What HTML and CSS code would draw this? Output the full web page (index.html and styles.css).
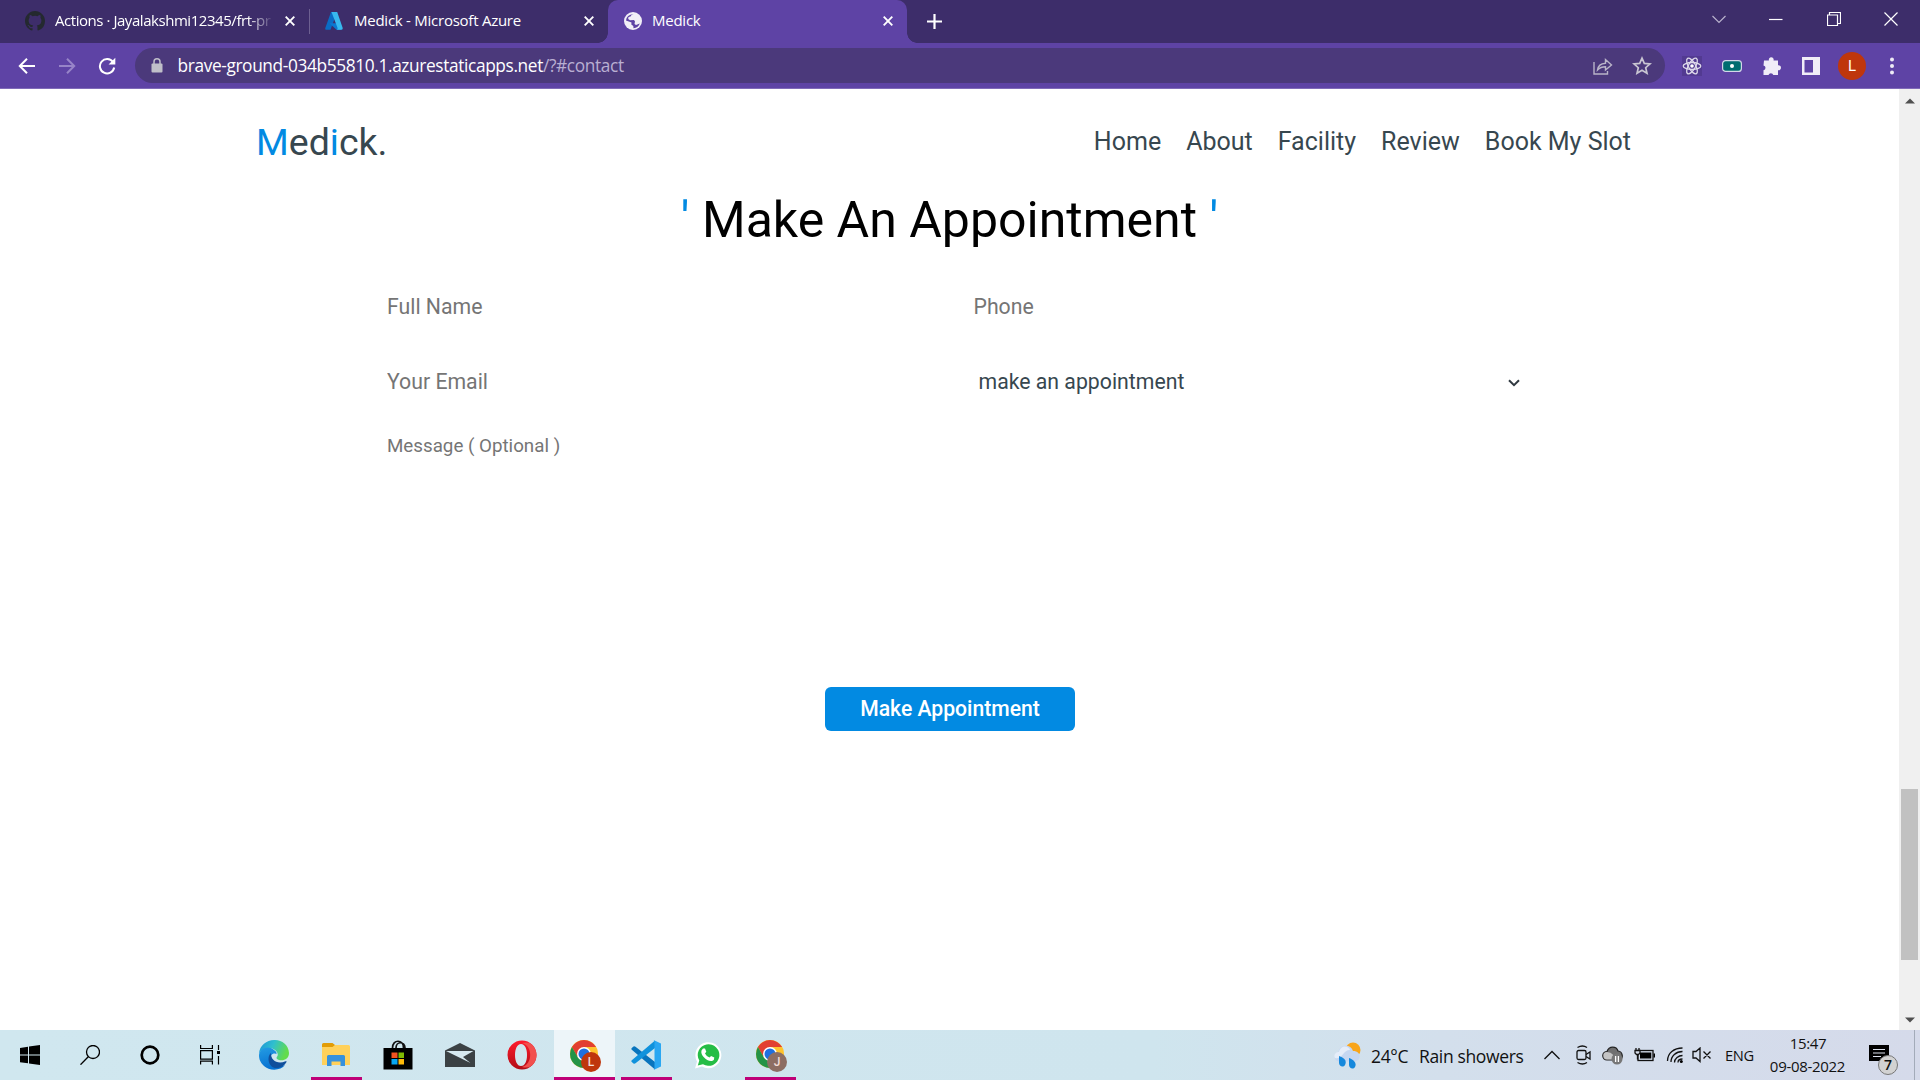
FILE: index.html
```html
<!DOCTYPE html>
<html lang="en">
<head>
<meta charset="utf-8">
<title>Medick</title>
<link rel="stylesheet" href="styles.css">
</head>
<body>
<div class="screen">
  <div class="tabstrip">
    <div class="tab tab-first">
      <svg class="fav-github" width="20" height="20" viewBox="0 0 16 16"><path fill="#24292f" d="M8 0C3.58 0 0 3.58 0 8c0 3.54 2.29 6.53 5.47 7.59.4.07.55-.17.55-.38 0-.19-.01-.82-.01-1.49-2.01.37-2.53-.49-2.69-.94-.09-.23-.48-.94-.82-1.13-.28-.15-.68-.52-.01-.53.63-.01 1.08.58 1.23.82.72 1.21 1.87.87 2.33.66.07-.52.28-.87.51-1.07-1.78-.2-3.64-.89-3.64-3.95 0-.87.31-1.59.82-2.15-.08-.2-.36-1.02.08-2.12 0 0 .67-.21 2.2.82a7.4 7.4 0 0 1 4 0c1.53-1.04 2.2-.82 2.2-.82.44 1.1.16 1.92.08 2.12.51.56.82 1.27.82 2.15 0 3.07-1.87 3.75-3.65 3.95.29.25.54.73.54 1.48 0 1.07-.01 1.93-.01 2.2 0 .21.15.46.55.38A8.01 8.01 0 0 0 16 8c0-4.42-3.58-8-8-8z"/></svg>
      <span class="tab-title fade">Actions · Jayalakshmi12345/frt-pr</span>
      <svg class="x" width="10" height="10" viewBox="0 0 10 10"><path d="M.7.7l8.6 8.6M9.3.7L.7 9.3"/></svg>
    </div>
    <i class="tab-sep"></i>
    <div class="tab tab-second">
      <svg width="20" height="20" viewBox="0 0 20 20"><path fill="#0a6cc4" d="M7 1h6L6.500 18.800H2Q.7 18.500 1.300 17z"/><path fill="#0b79d0" d="M5.500 12.300h9.500l2.500 6.500h-5z"/><path fill="#38b9ee" d="M7.500 1h5.700l5.500 16q.3 1.500-1.200 1.800h-4.800q1.300-.5.800-2z"/></svg>
      <span class="tab-title">Medick - Microsoft Azure</span>
      <svg class="x" width="10" height="10" viewBox="0 0 10 10"><path d="M.7.7l8.600 8.600M9.300.7L.7 9.300"/></svg>
    </div>
    <div class="tab tab-active">
      <svg width="18" height="18" viewBox="0 0 18 18"><circle cx="9" cy="9" r="9" fill="#f1eff7"/><path fill="#5e43a5" d="M9.500 2Q7 2.500 6.500 4.500L4.500 5l-.3 2L6 8.200l4-.2 1 1.500-.5 2.500 1.500 1 3.800-1.500Q14 16 9.500 16.200L9.300 14l-2-1.500.2-2-2-.8L2 8.500Q2.500 2.800 9.500 2z"/></svg>
      <span class="tab-title">Medick</span>
      <svg class="x" width="10" height="10" viewBox="0 0 10 10"><path d="M.7.7l8.600 8.600M9.300.7L.7 9.300"/></svg>
    </div>
    <svg class="plus" width="15" height="15" viewBox="0 0 15 15"><path d="M7.500 0v15M0 7.500h15"/></svg>
    <div class="window-buttons">
      <svg width="14" height="14" viewBox="0 0 14 14" stroke="#b9b2cd"><path d="M.5 4L7 10.500 13.500 4"/></svg>
      <svg width="14" height="14" viewBox="0 0 14 14"><path d="M0 7.500h13.500"/></svg>
      <svg width="14" height="14" viewBox="0 0 14 14"><path d="M.5 3h10v10.500H.5zM2.500 3V.5h11v11h-3"/></svg>
      <svg width="14" height="14" viewBox="0 0 14 14"><path d="M.5.5l13 13M13.500.5l-13 13"/></svg>
    </div>
  </div>

  <div class="toolbar">
    <div class="nav-buttons">
      <svg width="18" height="18" viewBox="0 0 18 18" stroke="#fff"><path d="M17 9H2M9 1.800L1.800 9 9 16.200"/></svg>
      <svg width="18" height="18" viewBox="0 0 18 18" stroke="#9784c8"><path d="M1 9h15M9 1.800L16.200 9 9 16.200"/></svg>
      <svg width="18" height="18" viewBox="0 0 18 18" stroke="#fff"><path d="M15 5A7.200 7.200 0 1 0 16.200 10.500"/><path d="M17.300.8v6.700h-6.700z" fill="#fff" stroke="none"/></svg>
    </div>
    <div class="omnibox">
      <svg class="lock" width="12" height="15" viewBox="0 0 12 15"><path d="M3 6V3.800a3 3 0 0 1 6 0V6" fill="none" stroke="#c0bfc9" stroke-width="1.500"/><rect y="5.500" x=".5" width="11" height="9" rx="1" fill="#c0bfc9"/></svg>
      <span class="url">brave-ground-034b55810.1.azurestaticapps.net<em>/?#contact</em></span>
      <svg class="share" width="20" height="18" viewBox="0 0 20 18"><path d="M1 5v12h13.500v-3M4.500 13c.5-4 3-6.500 8-6.800V2.500L18.500 8l-6 5V9.800c-4 0-6 1-8 3.200z"/></svg>
      <svg width="20" height="20" viewBox="0 0 20 20"><path stroke="#c9c6d2" stroke-width="1.700" fill="none" d="M10 2.200l2.300 5.200 5.700.5-4.300 3.800 1.300 5.600-5-3-5 3 1.300-5.600L2 7.900l5.700-.5z"/></svg>
    </div>
    <div class="extensions">
      <svg width="20" height="20" viewBox="0 0 20 20"><rect width="20" height="20" fill="#523a91"/><g fill="none" stroke="#ddd8ea" stroke-width="1.300"><ellipse cx="10" cy="10" rx="8.800" ry="3.500"/><ellipse cx="10" cy="10" rx="8.800" ry="3.500" transform="rotate(60 10 10)"/><ellipse cx="10" cy="10" rx="8.800" ry="3.500" transform="rotate(120 10 10)"/></g><circle cx="10" cy="10" r="1.800" fill="#fff"/></svg>
      <svg width="20" height="12" viewBox="0 0 20 12"><rect x=".6" y=".6" width="18.800" height="10.800" rx="3" fill="#006d70" stroke="#d3d8e8" stroke-width="1.200"/><circle cx="10" cy="6" r="2" fill="#fff"/></svg>
      <svg width="20" height="20" viewBox="0 0 20 20"><path fill="#f0edf7" d="M2 4.500h5A2.400 2.400 0 1 1 11.500 4.500H16v4.800a2.500 2.500 0 1 1 0 4.900V19h-4.700a2.500 2.500 0 0 0-4.800 0H1.500v-4.700a2.500 2.500 0 0 0 0-4.900z"/></svg>
      <svg width="18" height="18" viewBox="0 0 18 18"><path fill="#f0edf7" fill-rule="evenodd" d="M0 0h18v18H0zM2.500 3v12.500H11V3z"/></svg>
      <b class="avatar">L</b>
      <svg class="dots" width="18" height="18" viewBox="0 0 18 18" fill="#eeebf6"><circle cx="9" cy="2.500" r="2"/><circle cx="9" cy="9" r="2"/><circle cx="9" cy="15.500" r="2"/></svg>
    </div>
  </div>

  <div class="viewport">
    <main class="page">
      <header class="site-header">
        <a class="logo"><span>M</span>ed<span>i</span>ck.</a>
        <nav class="site-nav"><a>Home</a><a>About</a><a>Facility</a><a>Review</a><a>Book My Slot</a></nav>
      </header>
      <h1 class="heading"><span>'</span> Make An Appointment <span>'</span></h1>
      <form class="contact">
        <input class="field" type="text" placeholder="Full Name">
        <input class="field" type="text" placeholder="Phone">
        <input class="field" type="text" placeholder="Your Email">
        <div class="choice"><span>make an appointment</span><svg width="12" height="8" viewBox="0 0 12 8"><path d="M1 1.200l5 5 5-5" fill="none" stroke="#303940" stroke-width="2"/></svg></div>
        <textarea class="message" placeholder="Message ( Optional )"></textarea>
        <button class="submit" type="button">Make Appointment</button>
      </form>
    </main>
    <div class="scrollbar">
      <svg width="10" height="6" viewBox="0 0 10 6"><path d="M0 5.500L5 .5l5 5z" fill="#505050"/></svg>
      <i class="thumb"></i>
      <svg class="down" width="10" height="6" viewBox="0 0 10 6"><path d="M0 .5l5 5 5-5z" fill="#505050"/></svg>
    </div>
  </div>

  <div class="taskbar">
    <div class="system">
      <svg width="20" height="20" viewBox="0 0 20 20"><path d="M0 2.900L8 1.700v7.700H0zM9 1.500L20 0v9.400H9zM0 10.500h8v7.800L0 17.200zM9 10.500h11V20L9 18.500z"/></svg>
      <svg width="20" height="20" viewBox="0 0 20 20"><g fill="none" stroke="#000" stroke-width="1.300"><circle cx="13" cy="7" r="6.500"/><path d="M8.500 11.500L.5 19.700"/></g></svg>
      <svg width="20" height="20" viewBox="0 0 20 20"><circle cx="10" cy="10" r="8.300" fill="none" stroke="#000" stroke-width="2.700"/></svg>
      <svg width="20" height="20" viewBox="0 0 20 20"><path fill="none" stroke="#000" stroke-width="1.200" d="M.6 0v3.500h11.800V0M.6 5.600h11.800v8.600H.6zM.6 19.500v-3.300h11.800v3.300M18.500 0v5M18.500 11v8.500"/><path d="M17 6h3v3h-3z"/></svg>
    </div>
    <div class="apps">
      <div class="app"><svg width="30" height="30" viewBox="0 0 30 30"><defs><linearGradient id="eg" x2="1" y2=".3"><stop stop-color="#1b91d8"/><stop offset=".5" stop-color="#30bfce"/><stop offset="1" stop-color="#63dc4c"/></linearGradient><linearGradient id="eb" x2=".3" y2="1"><stop stop-color="#249ce3"/><stop offset="1" stop-color="#0671d1"/></linearGradient></defs><path fill="url(#eg)" d="M0 14C1-4 29-5 30 13c0 6-5 8-10 7-3-1-3-2-1.500-4C20 12 15 8 10 8 5 8 1 11 0 14z"/><path fill="url(#eb)" d="M0 15C1 8 9 5 15 10c3 2 3 4 2 4-4-2-8 4-4 9 3 4 9 4 13 2-4 6-16 6-21 1C1 22 0 19 0 15z"/><path fill="#104f9c" d="M12 13c-5 4-2 16 6 15 4 0 8-3 9.500-6 .5-1-.5-1-1-.7-8 3.500-15-1-14.500-8.300z"/></svg></div>
      <div class="app open"><svg width="28" height="24" viewBox="0 0 28 24"><path fill="#e29c06" d="M0 1.500Q0 0 1.500 0h9l2.500 2-1 4H0z"/><path fill="#ffd15b" d="M0 4h10.500l2.500-2h13.500Q28 2 28 3.500V22H0z"/><path fill="#3691dc" d="M5 13.500Q5 12 6.500 12h15q1.500 0 1.500 1.500V23h-4.500v-4.500h-9V23H5z"/></svg></div>
      <div class="app"><svg width="30" height="30" viewBox="0 0 30 30"><path d="M.5 8H29.500v21.500H.5z"/><path d="M9.500 8c0-9 11-9 11 0M13 8c0-7 9-7 9 0" fill="none" stroke="#111" stroke-width="1.700"/><path fill="#f35321" d="M8.500 12.500h6V18h-6z"/><path fill="#80bb03" d="M15.500 12.500h5.500V18h-5.500z"/><path fill="#06a6f0" d="M8.500 19h6v5.500h-6z"/><path fill="#ffba08" d="M15.500 19h5.500v5.500h-5.500z"/></svg></div>
      <div class="app"><svg width="30" height="24" viewBox="0 0 30 24"><path fill="#3b4144" d="M0 7.500L15 0l15 7.500V24H0z"/><path fill="#d7e9f0" d="M1 8h27.500l-10.500 6 7.500 6z"/></svg></div>
      <div class="app"><svg width="30" height="30" viewBox="0 0 30 30"><defs><linearGradient id="og" x2="0" y2="1"><stop stop-color="#ff1b2d"/><stop offset="1" stop-color="#b10d16"/></linearGradient></defs><path fill="url(#og)" fill-rule="evenodd" d="M15 .5a14.500 14.500 0 1 0 0 29 14.500 14.500 0 1 0 0-29zM14 4c4 0 6 5 6 11s-2 11-6 11-6-5-6-11 2-11 6-11z"/><path fill="#f2504e" d="M15 3c11-3 14.500 7 14.500 12S26 30 15 27c11-3 11-21 0-24z"/></svg></div>
      <div class="app open current"><svg class="chrome" width="32" height="32" viewBox="0 0 32 32"><circle cx="14" cy="15" r="14" fill="#ffc32c"/><path fill="#e23f31" d="M1.900 8a14 14 0 0 1 24.200 0H14l-6.100 10.500z"/><path fill="#249347" d="M1.900 8A14 14 0 0 0 14 29l6-10.500H8z"/><circle cx="14" cy="15" r="7" fill="#fff"/><circle cx="14" cy="15" r="5.500" fill="#1f6fe0"/></svg><b class="badge">L</b></div>
      <div class="app open"><svg width="30" height="30" viewBox="0 0 30 30"><path fill="#0874bd" d="M.5 9.500q-.5-1 .3-1.600l1.700-1.300q1-.6 2 .2L24 22v7.500z"/><path fill="#1092dc" d="M.5 20.500q-.5 1 .3 1.600l1.700 1.300q1 .6 2-.2L24 8V.5z"/><path fill="#2aa7f2" d="M22.500 0L30 3.500v23L22.500 30q1-.5 1-2V2q0-1.500-1-2z"/></svg></div>
      <div class="app"><svg width="28" height="28" viewBox="0 0 28 28"><path fill="#fff" d="M1 27.500l2-7A13 13 0 1 1 8 25.500z"/><path fill="#25bd46" d="M3.800 24.600l1.500-5A10.800 10.800 0 1 1 9 23.300z"/><path fill="#fff" d="M9 7.500h2l1.300 3.200-1.300 1.700q1.500 3 4.500 4.200l1.600-1.700 3.200 1.500q.3 2.600-2.300 3.600C13 21 6 14 7.500 9.500z"/></svg></div>
      <div class="app open"><svg class="chrome" width="32" height="32" viewBox="0 0 32 32"><circle cx="14" cy="15" r="14" fill="#ffc32c"/><path fill="#e23f31" d="M1.900 8a14 14 0 0 1 24.200 0H14l-6.100 10.500z"/><path fill="#249347" d="M1.900 8A14 14 0 0 0 14 29l6-10.500H8z"/><circle cx="14" cy="15" r="7" fill="#fff"/><circle cx="14" cy="15" r="5.500" fill="#1f6fe0"/></svg><b class="badge badge-j">J</b></div>
    </div>
    <div class="tray">
      <svg width="27" height="27" viewBox="0 0 27 27"><circle cx="19" cy="8" r="7.500" fill="#f8a51b"/><path fill="#c6d7f1" d="M4 19.500a5 5 0 0 1 .5-9.500C6 2 17 2 19 9c9 0 8 10 2 10.500z"/><path fill="#e5edf9" d="M1 16a4 4 0 0 1 4-6C7 2 15 4 16 8 9 8 8 18 1 16z"/><path fill="#1588dc" d="M5 14c6 2 8 5 6 9-2 3-6 1-6-2zM15 16c5 2 8 5 6 9-2 3-6 1-6-2z"/></svg>
      <span class="temp">24°C</span><span class="weather">Rain showers</span>
      <div class="tray-icons">
        <svg width="18" height="18" viewBox="0 0 18 18"><path d="M1.500 13L9 5.500l7.500 7.500"/></svg>
        <svg class="meet" width="18" height="20" viewBox="0 0 18 20"><rect x="2" y="5.500" width="9" height="9" rx="1.500"/><path d="M11 9.500l4-2.500v7l-4-2.500M2.500 2.500q5-3 9.500 0M2.500 17.500q5 3 9.500 0"/></svg>
        <svg class="cloud" width="22" height="20" viewBox="0 0 22 20"><path d="M5 15a4.200 4.200 0 0 1 0-8.500C7 .5 14.500 1 16 6c5 .5 6 8 1 9z" fill="#707070" stroke="#222" stroke-width="1.200"/><path d="M5 14.400a3.600 3.600 0 0 1 0-7.300q4 0 6 2.700l4 4.600z" fill="#c4c4c4" stroke="none"/><circle cx="15" cy="14" r="5.500" fill="#777" stroke="none"/><path d="M13.600 11v6M16.400 11v6" stroke="#fff"/></svg>
        <svg width="22" height="16" viewBox="0 0 22 16"><rect x="4" y="3.500" width="15" height="10"/><path d="M6 5.500h11.300v6H6zM19.500 6.500H21v4h-1.500z" fill="#000" stroke="none"/><path d="M1 3.500h5V6L4.500 7.500h-2L1 6z" fill="#d5dcea"/><path d="M2 1v2M5 1v2M3.500 8v4.500"/></svg>
        <svg width="18" height="18" viewBox="0 0 18 18"><path d="M1.500 15C1.500 7 8 2 16.500 2M5 16C5 10 10 5.500 16.500 5.500M8.500 16.500c0-4 4-7 8-7M12 16.500q0-3.500 4.500-3.500"/><circle cx="15.300" cy="15.500" r="1.500" fill="#000" stroke="none"/></svg>
        <svg class="volume" width="20" height="16" viewBox="0 0 20 16"><path d="M1 4.500h3l4-3.500v13.500L4 11H1zM11.500 4.500l7 7M18.500 4.500l-7 7"/></svg>
      </div>
      <span class="lang">ENG</span>
      <div class="clock"><span class="time">15:47</span><span class="date">09-08-2022</span></div>
      <div class="notice"><svg width="21" height="21" viewBox="0 0 21 21"><path d="M0 0h20v16h-8l-5 0H0z"/><path stroke="#dbe0ec" stroke-width="1.200" d="M4 4.500h12M4 8h12M4 11.500h8"/></svg><b class="count">7</b></div>
      <i class="peek"></i>
    </div>
  </div>
</div>
</body>
</html>
```
FILE: styles.css
```css
* { box-sizing: border-box; }
body { margin: 0; }
svg { display: block; flex: none; }
.screen { width: 1920px; height: 1080px; display: flex; flex-direction: column; overflow: hidden; font-family: "Open Sans", sans-serif; background: #fff; }

/* browser tabs */
.tabstrip { height: 43px; display: flex; align-items: center; background: #3d2d6a; color: #fff; }
.tab { height: 43px; display: flex; align-items: center; }
.tab-first { width: 309px; padding: 0 14px 2px 25px; }
.tab-second { width: 297px; padding: 0 14px 2px 13px; }
.tab-active { position: relative; width: 299px; padding: 0 14px 2px 16px; background: #5e43a5; border-radius: 10px 10px 0 0; }
.tab-active::before, .tab-active::after { content: ""; position: absolute; bottom: 0; width: 10px; height: 10px; }
.tab-active::before { left: -10px; background: radial-gradient(circle at 0 0, transparent 9.500px, #5e43a5 10px); }
.tab-active::after { right: -10px; background: radial-gradient(circle at 100% 0, transparent 9.500px, #5e43a5 10px); }
.tab-title { margin: -1px 0 0 10px; font-size: 15px; letter-spacing: -0.250px; white-space: nowrap; }
.fade { width: 219px; letter-spacing: -0.450px; -webkit-mask-image: linear-gradient(90deg, #000 88%, transparent); mask-image: linear-gradient(90deg, #000 88%, transparent); }
.tab-sep { width: 1px; height: 25px; margin-right: 1px; background: #6d6091; }
.x { margin-left: auto; fill: none; stroke: #fff; stroke-width: 1.900; }
.plus { margin-left: 20px; stroke: #fff; stroke-width: 2.200; }
.window-buttons { display: flex; gap: 43.500px; margin: 0 22px 6px auto; fill: none; stroke: #fff; stroke-width: 1.200; }

/* address row */
.toolbar { height: 46px; display: flex; align-items: center; background: #5e43a5; border-bottom: 1px solid #806bb8; }
.nav-buttons { display: flex; gap: 22px; width: 135px; padding-left: 18px; fill: none; stroke-width: 2; }
.omnibox { width: 1530px; height: 35px; display: flex; align-items: center; padding: 0 13px 0 16px; border-radius: 18px; background: #4b397b; }
.url { flex: 1; margin-left: 14.500px; color: #fff; font-size: 17.300px; letter-spacing: -0.370px; }
.url em { font-style: normal; color: #b9afd2; }
.share { margin-right: 19px; fill: none; stroke: #b9b4c8; stroke-width: 1.400; }
.extensions { display: flex; align-items: center; gap: 20px; padding-left: 17px; }
.avatar { width: 28px; height: 28px; margin: 0 1px 0 -2px; border-radius: 50%; background: #bf360c; color: #fff; font: 400 15px/28px Roboto, sans-serif; text-align: center; }
.dots { margin-left: -4px; }

/* web page */
.viewport { height: 941px; display: flex; }
.page { flex: 1; font-family: Roboto, sans-serif; color: #37474f; }
.site-header { height: 106px; display: flex; justify-content: space-between; align-items: center; padding: 0 268px 1px 256px; }
.logo { font-size: 37.500px; }
.logo span, .heading span { color: #028ae2; }
.site-nav { display: flex; gap: 25px; font-size: 25px; }
.heading { margin: 0; height: 50px; font-size: 50px; line-height: 50px; font-weight: 400; text-align: center; color: #000; }
.contact { display: grid; grid-template-columns: 586.500px 586.500px; grid-template-rows: 75px 75px 268px 44px; width: 1173px; margin: 24px 0 0 387px; }
.field, .message { width: 100%; padding: 0; border: 0; outline: 0; background: none; font-family: Roboto, sans-serif; color: #37474f; }
.field { font-size: 21.250px; }
.field::placeholder, .message::placeholder { color: #757575; }
.choice { display: flex; align-items: center; justify-content: space-between; padding: 0 40px 0 5px; font-size: 21.250px; }
.choice svg { margin-top: 2px; }
.message { grid-column: 1 / 3; height: 200px; padding-top: 16px; font-size: 18.750px; resize: none; }
.submit { grid-column: 1 / 3; width: 250px; height: 44px; margin-left: 438px; padding: 0 0 2px; border: 0; border-radius: 6px; background: #028ae2; color: #fff; font: 500 21.150px Roboto, sans-serif; }
.scrollbar { width: 21px; display: flex; flex-direction: column; align-items: center; padding: 9px 0 7px; background: #f0f0f0; }
.thumb { width: 17px; height: 171px; margin-top: 685px; background: #c1c1c1; }
.down { margin-top: auto; }

/* desktop bar */
.taskbar { height: 50px; display: flex; align-items: center; background: linear-gradient(90deg, #d0e7ef 0, #cfe5ee 60%, #d3dfec 75%, #d5daea 100%); color: #111; }
.system { display: flex; gap: 40px; width: 243px; padding-left: 20px; }
.apps { display: flex; }
.app { position: relative; width: 62px; height: 50px; display: flex; align-items: center; justify-content: center; }
.open::after { content: ""; position: absolute; left: 6px; right: 5px; bottom: 0; height: 3px; background: #bf0077; }
.current::before { content: ""; position: absolute; inset: 0 0 0 1px; background: #edf5f9; }
.current::after { left: 1px; right: 0; }
.current svg { position: relative; }
.chrome { margin-left: 4px; }
.badge { position: absolute; left: 28px; top: 22px; width: 20px; height: 20px; border-radius: 50%; background: #bf360c; color: #f3ddd6; font: 500 12px/20px Roboto, sans-serif; text-align: center; }
.badge-j { background: #8d6e63; }
.tray { display: flex; align-items: center; height: 50px; margin-left: auto; }
.temp, .weather { font-size: 17.500px; letter-spacing: -0.350px; white-space: nowrap; padding-top: 2px; }
.temp { width: 48px; margin-left: 10px; }
.weather { width: 124px; }
.tray-icons { display: flex; align-items: center; justify-content: space-between; width: 169px; fill: none; stroke: #111; stroke-width: 1.300; }
.meet { margin: 0 -4px 0 4px; }
.cloud { margin: 0 -1px 0 3px; }
.volume { margin-left: -2px; }
.lang { width: 45px; margin-left: 13px; font-size: 14.700px; letter-spacing: -0.300px; }
.clock { display: flex; flex-direction: column; width: 76px; text-align: center; font-size: 15px; letter-spacing: -0.300px; line-height: 23px; white-space: nowrap; }
.clock .date { margin-left: -1px; }
.notice { position: relative; width: 45px; height: 21px; margin-left: 23px; }
.count { position: absolute; left: 9px; top: 10px; width: 20px; height: 20px; border: 1px solid #777; border-radius: 50%; background: #d2d2d2; font: 600 14px/18px "Open Sans", sans-serif; text-align: center; }
.peek { width: 1px; height: 50px; margin-right: 5px; background: #a3abb9; }
```
